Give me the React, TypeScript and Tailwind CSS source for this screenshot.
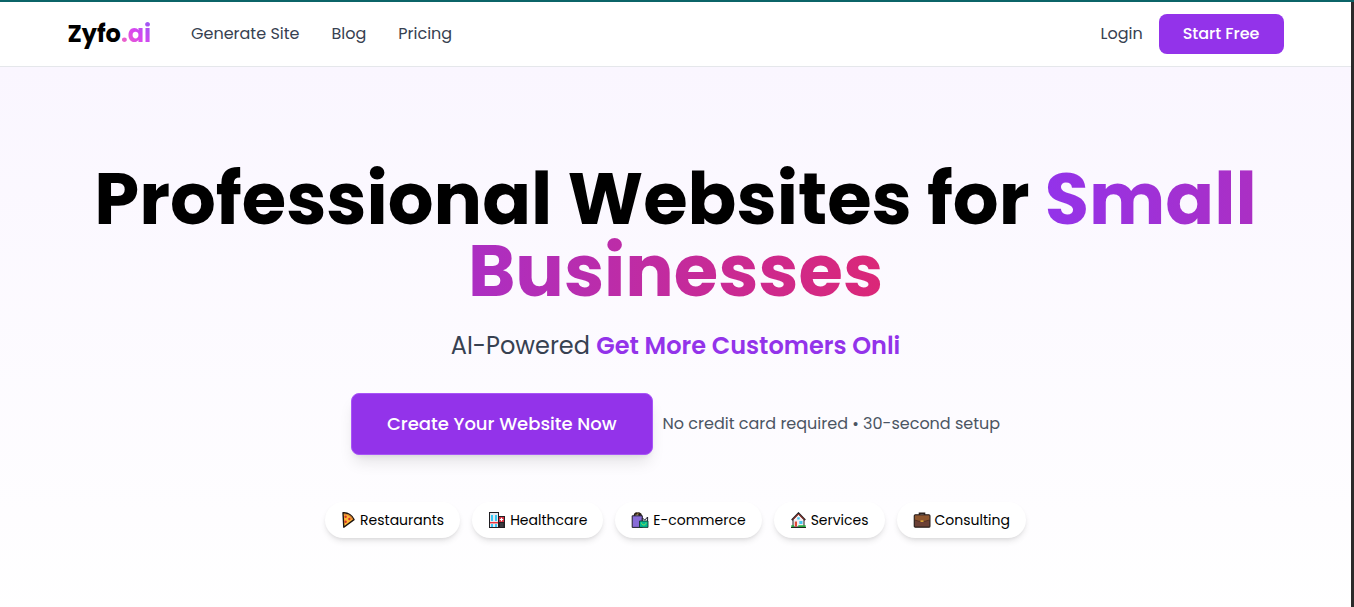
import type { ReactNode } from "react";

function Icon({ children }: { children: ReactNode }) {
  return (
    <svg viewBox="-1 0 18 16" className="h-4 w-[18px] shrink-0" aria-hidden="true">
      {children}
    </svg>
  );
}

function PizzaIcon() {
  return (
    <svg viewBox="0 0 15 16" className="h-4 w-[15px] shrink-0" aria-hidden="true">
      <path d="M2 .7 C7 .5 11.5 3.4 13 7.6 L2.8 15.2 Z" fill="#ffb636" stroke="#1c1410" strokeWidth="1.4" strokeLinejoin="round" />
      <path d="M2.8 2 C7 2 10.4 4.2 11.8 7.7" fill="none" stroke="#c87530" strokeWidth="1.2" />
      <circle cx="4.6" cy="4.8" r="1.2" fill="#d3302b" />
      <circle cx="8.4" cy="7" r="1.2" fill="#d3302b" />
      <circle cx="4.6" cy="9.8" r="1.2" fill="#d3302b" />
    </svg>
  );
}

function HospitalIcon() {
  return (
    <Icon>
      <path d="M0 0 H10 V4 H16 V16 H0 Z" fill="#201e22" />
      <path d="M1 1 H9 V15 H1 Z" fill="#e4e8ee" />
      <path d="M2 3 H4 V9 H2 Z M6 3 H8 V9 H6 Z M2 12 H4 V15 H2 Z M6 12 H8 V15 H6 Z" fill="#35c6f4" />
      <path d="M1 10 H9 V11.4 H1 Z" fill="#e8323c" />
      <path d="M10 5 H15 V10 H10 Z" fill="#d52b3c" />
      <path d="M12.5 5.8 V9.2 M10.8 7.5 H14.2" stroke="#fff" strokeWidth="1.2" />
      <path d="M11 11 H14.5 V15 H11 Z" fill="#3a3a40" />
    </Icon>
  );
}

function BagsIcon() {
  return (
    <Icon>
      <path d="M2.5 4 C2.5 .2 7 .2 7.5 4 M4.5 3 C5 0 9 .6 9.5 4" fill="none" stroke="#2a2016" strokeWidth="1.6" />
      <path d="M4.5 2.6 L6.5 1.6" stroke="#c69a4a" strokeWidth=".9" />
      <path d="M.2 3.8 H10.3 V15.4 H.2 Z" fill="#886cd8" stroke="#201e2c" strokeWidth="1" />
      <path d="M10.3 9 V6 L12.8 8 L15.6 5 V9" fill="#e8f2f2" stroke="#201e2c" strokeWidth="1" />
      <path d="M7.5 9 H16 V15.4 H7.5 Z" fill="#00b892" stroke="#17342c" strokeWidth=".9" />
      <path d="M9.5 10.6 C9.5 13.7 14 13.7 14 10.6" fill="none" stroke="#8ae05a" strokeWidth="1" />
    </Icon>
  );
}

function HouseIcon() {
  return (
    <svg viewBox="-1 0 17 16" className="h-4 w-[17px] shrink-0" aria-hidden="true">
      <path d="M2 7.5 L7.5 2 L13 7.5 V15 H2 Z" fill="#f0eef2" stroke="#252326" strokeWidth="1" />
      <path d="M.8 8.2 L7.5 1.2 L14.2 8.2" fill="none" stroke="#252326" strokeWidth="1.8" />
      <path d="M2 7.6 L7.5 2 L13 7.6" fill="none" stroke="#d6402e" strokeWidth=".9" />
      <path d="M3.8 9.5 H6 V14.5 H3.8 Z" fill="#e04832" />
      <path d="M8.3 9 H11.5 V12 H8.3 Z M6.3 5.3 H8.7 V7.5 H6.3 Z" fill="#41c8f0" />
      <path d="M.3 13.2 H3 V15.3 H.3 Z M7.3 13.2 H14.7 V15.3 H7.3 Z" fill="#28aa3e" />
      <path d="M0 15.5 H15" stroke="#202820" strokeWidth="1" />
    </svg>
  );
}

function BriefcaseIcon() {
  return (
    <Icon>
      <path d="M5.5 3.5 V1.2 H10.5 V3.5" fill="none" stroke="#2b211d" strokeWidth="1.6" />
      <rect x=".3" y="2.8" width="15.6" height="12.4" rx="1" fill="#6b4035" stroke="#2b211d" strokeWidth="1.2" />
      <path d="M.9 3.4 H15.3 V8 L11 9.3 H5 L.9 8 Z" fill="#8e562e" />
      <path d="M.9 8 L5 9.3 H11 L15.3 8" fill="none" stroke="#4c2b20" strokeWidth=".8" />
      <path d="M6.5 8.5 H9.5 V9.8 H6.5 Z" fill="#f9c23c" />
    </Icon>
  );
}

const NAV_LINKS = ["Generate Site", "Blog", "Pricing"];

const INDUSTRIES = [
  { name: "Restaurants", icon: PizzaIcon },
  { name: "Healthcare", icon: HospitalIcon },
  { name: "E-commerce", icon: BagsIcon },
  { name: "Services", icon: HouseIcon },
  { name: "Consulting", icon: BriefcaseIcon },
];

function Header() {
  return (
    <header className="border-b border-gray-200 bg-white">
      <div className="mx-auto flex h-16 max-w-7xl items-center justify-between px-8">
        <div className="flex items-center gap-10">
          <a href="#" className="text-2xl font-bold text-black">
            Zyfo
            <span className="bg-linear-to-tr/srgb from-[#f472b6] via-[#d946ef] to-[#8b5cf6] bg-clip-text text-transparent">.ai</span>
          </a>
          <nav className="flex items-center gap-8">
            {NAV_LINKS.map((link) => (
              <a key={link} href="#" className="text-[#374151]">
                {link}
              </a>
            ))}
          </nav>
        </div>
        <div className="flex items-center gap-4">
          <a href="#" className="text-[#374151]">Login</a>
          <button className="h-10 rounded-lg bg-[#9333ea] px-6 font-medium text-white">Start Free</button>
        </div>
      </div>
    </header>
  );
}

function Hero() {
  return (
    <section className="grow bg-linear-to-b/srgb from-[#faf6ff] to-white py-24">
      <div className="mx-auto flex max-w-7xl flex-col items-center px-8 text-center">
        <h1 className="text-7xl leading-[72px] font-bold text-black">
          Professional Websites for{" "}
          <span className="bg-linear-to-r/srgb from-[#9333ea] to-[#db2777] bg-clip-text text-transparent">Small Businesses</span>
        </h1>
        <p className="mt-[23px] text-2xl text-[#374151]">
          AI-Powered <span className="font-semibold text-[#9333ea]">Get More Customers Onli</span>
        </p>
        <div className="mt-[31px] flex items-center gap-[10px]">
          <button className="rounded-lg border border-[#a855f7] bg-[#9333ea] px-[35px] py-4 text-lg leading-7 font-medium text-white shadow-lg">
            Create Your Website Now
          </button>
          <span className="text-[#4b5563]">No credit card required • 30-second setup</span>
        </div>
        <div className="mt-[47px] flex flex-wrap justify-center gap-3">
          {INDUSTRIES.map((industry) => (
            <span key={industry.name} className="flex items-center gap-1 rounded-full bg-white px-4 py-2 text-sm text-black shadow-md">
              <industry.icon />
              {industry.name}
            </span>
          ))}
        </div>
      </div>
    </section>
  );
}

export default function App() {
  return (
    <div className="flex min-h-screen flex-col font-['Poppins','Inter',sans-serif]">
      <div className="h-[2px] bg-[#0b6468]" />
      <div className="flex grow flex-col border-r-3 border-[#2b2b2b]">
        <Header />
        <Hero />
      </div>
    </div>
  );
}
